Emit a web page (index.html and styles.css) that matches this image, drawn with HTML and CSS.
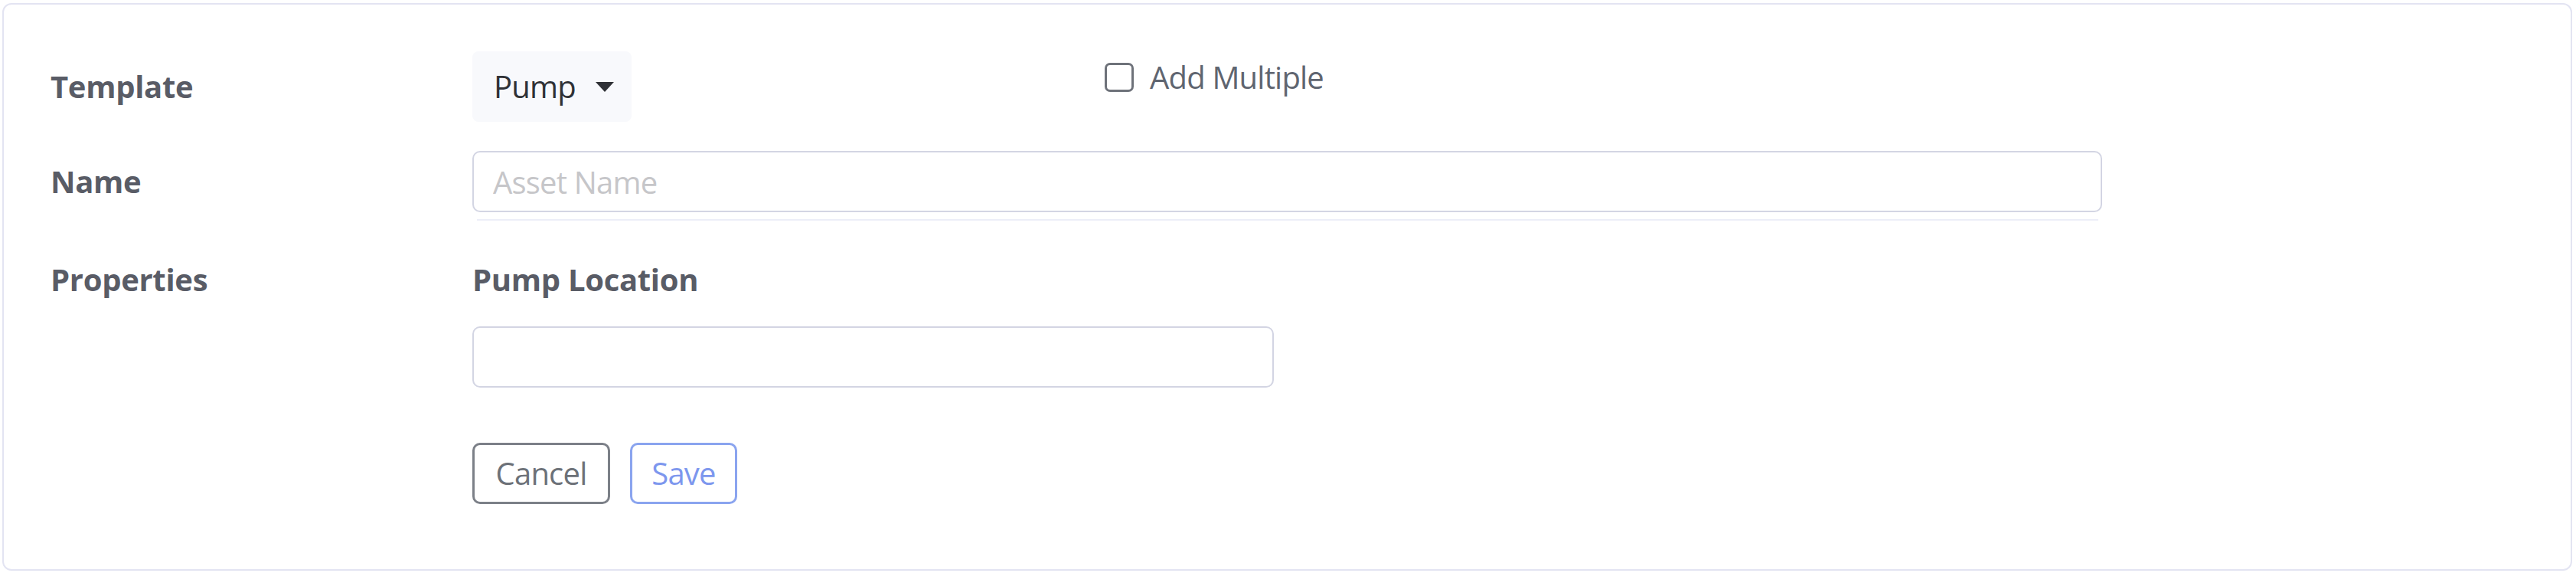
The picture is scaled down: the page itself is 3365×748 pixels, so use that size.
FILE: index.html
```html
<!DOCTYPE html>
<html lang="en">
<head>
<meta charset="utf-8">
<title>New Asset</title>
<link rel="stylesheet" href="styles.css">
</head>
<body>
<div class="card">
  <div class="form-row row-template">
    <div class="form-label">Template</div>
    <div class="form-field field-inline">
      <div class="dropdown"><span>Pump</span><span class="caret"></span></div>
      <label class="check"><input type="checkbox" class="check-box"><span>Add Multiple</span></label>
    </div>
  </div>
  <div class="form-row row-name">
    <div class="form-label label-tall">Name</div>
    <div class="form-field">
      <input type="text" class="text-input input-wide" placeholder="Asset Name">
      <div class="underline"></div>
    </div>
  </div>
  <div class="form-row row-props">
    <div class="form-label">Properties</div>
    <div class="form-field">
      <div class="prop-label">Pump Location</div>
      <input type="text" class="text-input input-half">
      <div class="actions">
        <button class="btn btn-cancel">Cancel</button>
        <button class="btn btn-save">Save</button>
      </div>
    </div>
  </div>
</div>
</body>
</html>
```

FILE: styles.css
```css
html, body {
  margin: 0;
  padding: 0;
  background: #ffffff;
}

body {
  padding: 4px 5px 3px 3px;
  font-family: "Open Sans", "Noto Sans", sans-serif;
  font-size: 40px;
  line-height: 60px;
  letter-spacing: -0.8px;
  color: #5a5c66;
}

.card {
  box-sizing: border-box;
  height: 741px;
  border: 2px solid #e3e4f2;
  border-radius: 12px;
  padding: 61px 0 0 61px;
  background: #ffffff;
}

.form-row {
  display: flex;
  align-items: center;
}

.form-label {
  width: 551px;
  flex: none;
  font-weight: 700;
  letter-spacing: -0.3px;
  color: #595c66;
}

.form-field {
  display: flex;
  flex-direction: column;
}

.field-inline {
  flex-direction: row;
  align-items: flex-start;
}

.dropdown {
  box-sizing: border-box;
  width: 208px;
  height: 92px;
  background: #f8f9fc;
  border-radius: 8px;
  display: flex;
  align-items: center;
  padding-left: 28px;
  color: #2f3136;
}

.caret {
  width: 0;
  height: 0;
  margin-left: 26px;
  border-top: 13px solid #2f3136;
  border-left: 12px solid transparent;
  border-right: 12px solid transparent;
}

.check {
  display: flex;
  align-items: center;
  margin-left: 618px;
  margin-top: 4px;
  gap: 21px;
  color: #5f6570;
}

.check-box {
  appearance: none;
  -webkit-appearance: none;
  margin: 0;
  width: 38px;
  height: 38px;
  box-sizing: border-box;
  border: 3px solid #6e727a;
  border-radius: 7px;
  background: #ffffff;
}

.row-name {
  align-items: flex-start;
  margin-top: 38px;
}

.label-tall {
  height: 80px;
  display: flex;
  align-items: center;
}

.text-input {
  box-sizing: border-box;
  height: 80px;
  border: 2px solid #d3d5e3;
  border-radius: 10px;
  padding: 0 25px;
  font-family: "Open Sans", "Noto Sans", sans-serif;
  font-size: 40px;
  letter-spacing: -0.8px;
  color: #495057;
  background: #ffffff;
  outline: none;
}

.text-input::placeholder {
  color: #c6c6c9;
}

.input-wide {
  width: 2129px;
}

.input-half {
  width: 1047px;
}

.underline {
  height: 2px;
  margin: 9px 5px 0 6px;
  background: #eceef8;
}

.row-props {
  align-items: flex-start;
  margin-top: 47px;
}

.prop-label {
  font-weight: 700;
  letter-spacing: -0.3px;
  color: #595c66;
}

.row-props .text-input {
  margin-top: 31px;
}

.actions {
  display: flex;
  gap: 26px;
  margin-top: 72px;
}

.btn {
  box-sizing: border-box;
  height: 80px;
  padding: 0 25px;
  border-radius: 10px;
  background: #ffffff;
  font-family: "Open Sans", "Noto Sans", sans-serif;
  font-size: 40px;
  letter-spacing: -0.8px;
  line-height: 1;
}

.btn-cancel {
  width: 180px;
  border: 3px solid #7c8088;
  color: #6c7178;
}

.btn-save {
  width: 140px;
  border: 3px solid #8aa4ef;
  color: #7d97ee;
}
```
